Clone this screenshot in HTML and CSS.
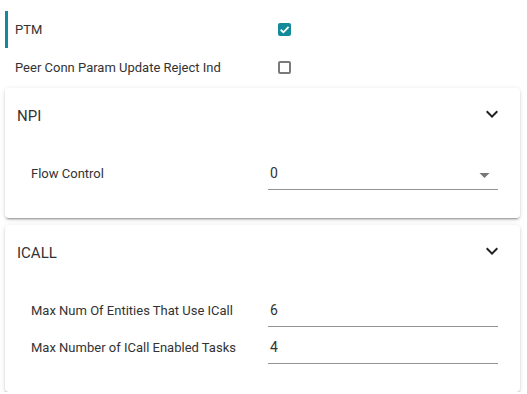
FILE: index.html
```html
<!DOCTYPE html>
<html>
<head>
  <meta charset="UTF-8" />
  <title>Config</title>
  <link rel="stylesheet" href="styles.css">
</head>
<body>

  <div class="page">
    <div class="check-row active">
      <span class="label">PTM</span>
      <span class="box checked">
        <svg viewBox="0 0 12 12" width="13" height="13"><path d="M2.5 6.2 L5 8.6 L9.8 3.6" fill="none" stroke="#fff" stroke-width="1.7"/></svg>
      </span>
    </div>
    <div class="check-row">
      <span class="label">Peer Conn Param Update Reject Ind</span>
      <span class="box"></span>
    </div>

    <div class="card">
      <div class="card-head">
        <span class="card-title">NPI</span>
        <svg class="chevron" viewBox="0 0 24 24" width="24" height="24"><path d="M16.59 8.59L12 13.17 7.41 8.59 6 10l6 6 6-6z"/></svg>
      </div>
      <div class="card-body">
        <div class="field-row">
          <span class="label">Flow Control</span>
          <div class="field select">
            0
            <svg class="caret" viewBox="0 0 10 5" width="11" height="5"><path d="M0 0 L10 0 L5 5 z"/></svg>
          </div>
        </div>
      </div>
    </div>

    <div class="card">
      <div class="card-head">
        <span class="card-title">ICALL</span>
        <svg class="chevron" viewBox="0 0 24 24" width="24" height="24"><path d="M16.59 8.59L12 13.17 7.41 8.59 6 10l6 6 6-6z"/></svg>
      </div>
      <div class="card-body">
        <div class="field-row">
          <span class="label">Max Num Of Entities That Use ICall</span>
          <div class="field">6</div>
        </div>
        <div class="field-row">
          <span class="label">Max Number of ICall Enabled Tasks</span>
          <div class="field">4</div>
        </div>
      </div>
    </div>
  </div>

</body>
</html>
```

FILE: styles.css
```css
body {
  margin: 0;
  font-family: Roboto, "Liberation Sans", sans-serif;
  background: #fff;
  color: #333;
}

.page {
  padding: 11px 7px 0 5px;
}

.check-row {
  display: grid;
  grid-template-columns: 263px 13px;
  align-items: center;
  height: 37px;
  padding-left: 10px;
  font-size: 13px;
}

.check-row.active {
  border-left: 3px solid #138a9a;
  padding-left: 7px;
  margin-bottom: 1px;
}

.box {
  width: 13px;
  height: 13px;
  box-sizing: border-box;
  border: 2px solid #7a7a7a;
  border-radius: 2px;
  display: flex;
}

.box.checked {
  background: #138a9a;
  border: none;
}

.card {
  margin-top: 2px;
  background: #fff;
  border-radius: 4px;
  box-shadow: 0 3px 1px -2px rgba(0, 0, 0, 0.2), 0 2px 2px 0 rgba(0, 0, 0, 0.14), 0 1px 5px 0 rgba(0, 0, 0, 0.12);
}

.card + .card {
  margin-top: 7px;
}

.card-head {
  height: 56px;
  display: flex;
  align-items: center;
  justify-content: space-between;
  padding: 0 16px 0 12px;
}

.card-title {
  font-size: 15px;
  color: #333;
}

.chevron {
  fill: #222;
  margin-top: -4px;
}

.card-body {
  padding: 19px 22px 28px 26px;
  display: flex;
  flex-direction: column;
  gap: 10px;
}

.field-row {
  display: grid;
  grid-template-columns: 237px 1fr;
  font-size: 13px;
}

.field-row .label {
  line-height: 20px;
  padding-top: 1px;
}

.field {
  height: 20px;
  line-height: 20px;
  padding: 0 2px 6px;
  border-bottom: 1px solid #949494;
  font-size: 14px;
  color: #333;
  display: flex;
  justify-content: space-between;
  align-items: center;
}

.caret {
  fill: #777;
  margin: 4px 6px 0 0;
}
```
